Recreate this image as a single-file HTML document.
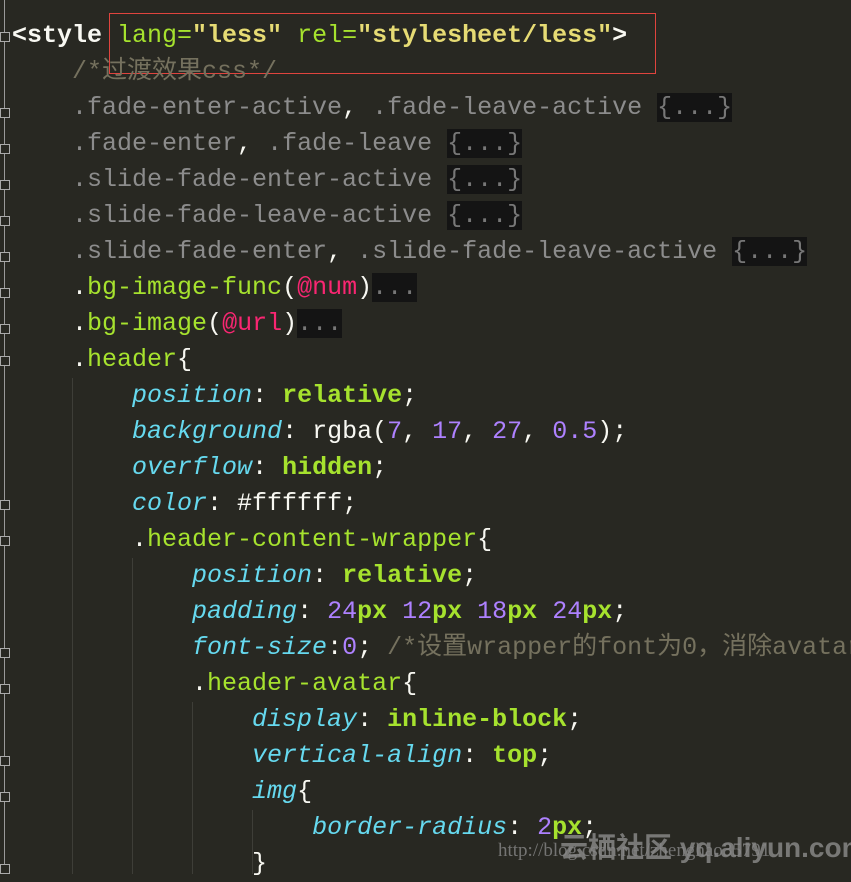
<!DOCTYPE html>
<html><head><meta charset="utf-8"><style>
body{margin:0;width:851px;height:874px;overflow:hidden;background:#282822;position:relative;font-family:"Liberation Mono","Noto Sans CJK SC",monospace;font-size:25px;color:#f8f8f2}
.l{position:absolute;left:12px;height:36px;line-height:36px;white-space:pre}
.t{color:#f8f8f2;font-weight:bold}.a{color:#a6e22e}.s{color:#e6db74;font-weight:bold}
.c{color:#75715e}.g{color:#8c8c8c}.f{background:#141414;color:#777}
.sel{color:#a6e22e}.at{color:#f92672}.p{color:#66d9ef;font-style:italic}
.v{color:#a6e22e;font-weight:bold}.n{color:#ae81ff}.w{color:#f8f8f2}
.gut{position:absolute;left:4px;top:0;width:1px;height:874px;background:#999}
.box{position:absolute;left:0;width:8px;height:8px;border:1px solid #aaa;background:#282822}
.ig{position:absolute;width:1px;background:#3e3e38}
.red{position:absolute;left:109px;top:13px;width:545px;height:59px;border:1px solid #e0443e}
.wm{position:absolute;left:498px;top:840px;color:#888;font-family:"Liberation Serif",serif;font-size:19px;opacity:.8;white-space:nowrap}
.wm2{position:absolute;left:560px;top:826px;color:#bbb;font-size:28px;font-family:"Liberation Sans","Noto Sans CJK SC",sans-serif;opacity:.55;font-weight:bold;white-space:nowrap}
</style></head><body>
<div class="gut"></div>
<div class="ig" style="left:72px;top:378px;height:496px"></div>
<div class="ig" style="left:132px;top:558px;height:316px"></div>
<div class="ig" style="left:192px;top:702px;height:172px"></div>
<div class="ig" style="left:252px;top:810px;height:64px"></div>
<div class="box" style="top:32px"></div>
<div class="box" style="top:108px"></div><div class="box" style="top:144px"></div><div class="box" style="top:180px"></div><div class="box" style="top:216px"></div><div class="box" style="top:252px"></div><div class="box" style="top:288px"></div><div class="box" style="top:324px"></div>
<div class="box" style="top:356px"></div><div class="box" style="top:500px"></div><div class="box" style="top:536px"></div><div class="box" style="top:648px"></div><div class="box" style="top:684px"></div><div class="box" style="top:756px"></div><div class="box" style="top:792px"></div><div class="box" style="top:864px"></div>
<div class="red"></div>
<div class="l" style="top:18px"><span class="t">&lt;style</span> <span class="a">lang=</span><span class="s">"less"</span> <span class="a">rel=</span><span class="s">"stylesheet/less"</span><span class="t">&gt;</span></div>
<div class="l c" style="top:54px">    /*过渡效果css*/</div>
<div class="l g" style="top:90px">    .fade-enter-active<span class="w">,</span> .fade-leave-active <span class="f">{...}</span></div>
<div class="l g" style="top:126px">    .fade-enter<span class="w">,</span> .fade-leave <span class="f">{...}</span></div>
<div class="l g" style="top:162px">    .slide-fade-enter-active <span class="f">{...}</span></div>
<div class="l g" style="top:198px">    .slide-fade-leave-active <span class="f">{...}</span></div>
<div class="l g" style="top:234px">    .slide-fade-enter<span class="w">,</span> .slide-fade-leave-active <span class="f">{...}</span></div>
<div class="l" style="top:270px">    <span class="w">.</span><span class="sel">bg-image-func</span>(<span class="at">@num</span>)<span class="f">...</span></div>
<div class="l" style="top:306px">    <span class="w">.</span><span class="sel">bg-image</span>(<span class="at">@url</span>)<span class="f">...</span></div>
<div class="l" style="top:342px">    <span class="w">.</span><span class="sel">header</span>{</div>
<div class="l" style="top:378px">        <span class="p">position</span>: <span class="v">relative</span>;</div>
<div class="l" style="top:414px">        <span class="p">background</span>: rgba(<span class="n">7</span>, <span class="n">17</span>, <span class="n">27</span>, <span class="n">0.5</span>);</div>
<div class="l" style="top:450px">        <span class="p">overflow</span>: <span class="v">hidden</span>;</div>
<div class="l" style="top:486px">        <span class="p">color</span>: #ffffff;</div>
<div class="l" style="top:522px">        .<span class="sel">header-content-wrapper</span>{</div>
<div class="l" style="top:558px">            <span class="p">position</span>: <span class="v">relative</span>;</div>
<div class="l" style="top:594px">            <span class="p">padding</span>: <span class="n">24</span><span class="v">px</span> <span class="n">12</span><span class="v">px</span> <span class="n">18</span><span class="v">px</span> <span class="n">24</span><span class="v">px</span>;</div>
<div class="l" style="top:630px">            <span class="p">font-size</span>:<span class="n">0</span>; <span class="c">/*设置wrapper的font为0，消除avatar</span></div>
<div class="l" style="top:666px">            .<span class="sel">header-avatar</span>{</div>
<div class="l" style="top:702px">                <span class="p">display</span>: <span class="v">inline-block</span>;</div>
<div class="l" style="top:738px">                <span class="p">vertical-align</span>: <span class="v">top</span>;</div>
<div class="l" style="top:774px">                <span class="p">img</span>{</div>
<div class="l" style="top:810px">                    <span class="p">border-radius</span>: <span class="n">2</span><span class="v">px</span>;</div>
<div class="l" style="top:846px">                }</div>
<div class="wm2">云栖社区 yq.aliyun.com</div>
<div class="wm">http://blog.csdn.net/zhenghao35791</div>
</body></html>
